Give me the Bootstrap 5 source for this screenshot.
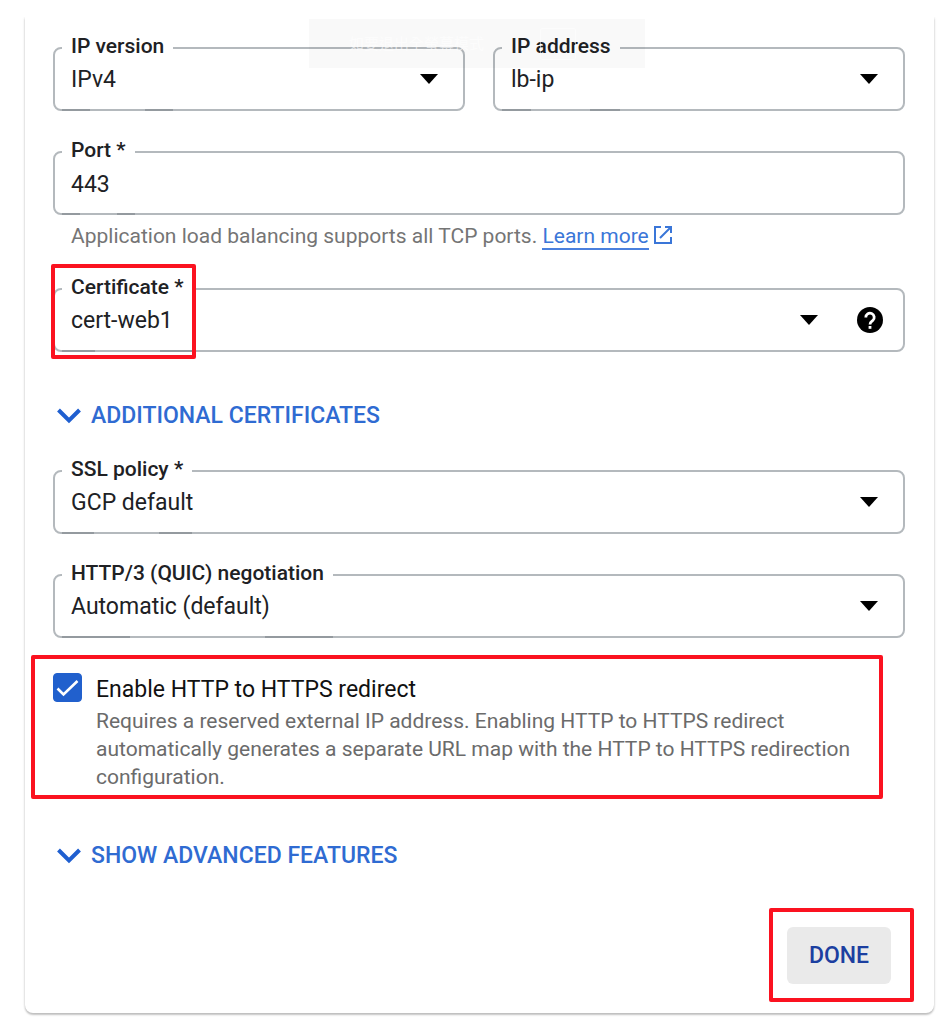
<!DOCTYPE html>
<html lang="en">
<head>
<meta charset="utf-8">
<meta name="viewport" content="width=device-width, initial-scale=1">
<title>Frontend configuration</title>
<link href="https://cdn.jsdelivr.net/npm/bootstrap@5.3.0/dist/css/bootstrap.min.css" rel="stylesheet">
<style>
  body { padding: 17px 14px 12px 25px; font-family: Roboto, "Noto Sans CJK TC", sans-serif; font-size: 23px; line-height: 28px; color: #202124; background: #fff; }
  .panel { padding: 30px 29px 11px 28px; border-radius: 0 0 8px 8px; background: #fff;
    box-shadow: 0 2px 2px rgba(0,0,0,.22), 0 0 3px rgba(0,0,0,.12); clip-path: inset(0 -8px -8px -8px); }
  .pair { gap: 28px; }
  .gap-field { margin-top: 40px; }
  .gap-hint { margin-top: 38px; }
  .gap-toggle { margin-top: 50px; }
  .gap-advanced { margin-top: 43px; }
  .outlined { height: 64px; border: 2px solid #b4b9bd; border-radius: 8px; }
  .outlined > label { position: absolute; top: -16px; left: 7px; padding: 0 9px; background: #fff; font-size: 21px; line-height: 26px; font-weight: 500; white-space: nowrap; }
  .outlined > label::after { content: ""; position: absolute; left: 0; right: 0; top: 76px; height: 2px;
    background: linear-gradient(90deg, #949a9f 25%, #b4b9bd 25% 75%, #949a9f 75%); }
  .entry { width: 100%; height: 60px; padding: 2px 16px 0; border: 0; background: transparent; color: #202124; font: inherit; line-height: 58px; appearance: none; }
  .outlined .caret { position: absolute; right: 25px; top: 25px; width: 18px; height: 10px; pointer-events: none; }
  .outlined .caret.inset { right: 85px; }
  .help-btn { position: absolute; right: 20px; top: 17px; line-height: 0; }
  .hint { padding: 7px 0 0 18px; font-size: 21px; line-height: 28px; color: #757575; }
  .hint a { color: #3a76d8; text-decoration: none; }
  .hint a span { border-bottom: 2px solid #4a80de; }
  .hint a svg { margin-left: 4px; vertical-align: -2px; }
  .toggle { gap: 10px; padding: 0 4px; font-size: 23px; line-height: 28px; font-weight: 500; color: #2f6bd2; }
  .callout { border: 4px solid #fb1220; border-radius: 2px; }
  .callout-cert { position: absolute; left: -4px; top: -26px; width: 145px; height: 95px; pointer-events: none; }
  .callout-redirect { gap: 14px; margin: 17px 22px 0 -22px; padding: 14px 12px 4px 18px; }
  .callout-done { padding: 15px 19px 14px 14px; margin-right: -9px; }
  .tick.form-check-input { width: 29px; height: 29px; margin: 0; border-radius: 4px; }
  .tick.form-check-input:checked { background-color: #2160cd; border-color: #2160cd; background-size: 29px 29px;
    background-image: url("data:image/svg+xml,%3Csvg xmlns='http://www.w3.org/2000/svg' viewBox='0 0 29 29'%3E%3Cpath d='M4.500 15.500L10.500 21.500 24.500 8' fill='none' stroke='white' stroke-width='2.600'/%3E%3C/svg%3E"); }
  .redirect-label { font-size: 23px; line-height: 34px; color: #111; }
  .redirect-note { font-size: 21px; line-height: 28px; color: #6b6b6b; }
  .done-btn { width: 104px; height: 57px; border-radius: 6px; background: #eaeaea; border: 0; color: #1c3fa0; font-size: 23px; font-weight: 500; }
  .toast-note { position: absolute; left: 309px; right: 303px; top: 19px; height: 49px; padding-left: 40px; gap: 56px; background: rgba(0,0,0,.022); color: rgba(255,255,255,.6); font-size: 15px; pointer-events: none; }
  .key-frame { width: 36px; height: 32px; border: 1px solid rgba(255,255,255,.5); border-radius: 2px; }
</style>
</head>
<body class="min-vh-100">
<main class="panel">
  <form>
    <div class="d-flex pair">
      <div class="outlined position-relative flex-fill w-50">
        <label for="ipver">IP version</label>
        <select class="entry" id="ipver"><option>IPv4</option></select>
        <svg class="caret" viewBox="0 0 18 10"><path d="M0 0h18L9 10z"/></svg>
      </div>
      <div class="outlined position-relative flex-fill w-50">
        <label for="ipaddr">IP address</label>
        <select class="entry" id="ipaddr"><option>lb-ip</option></select>
        <svg class="caret" viewBox="0 0 18 10"><path d="M0 0h18L9 10z"/></svg>
      </div>
    </div>
    <div class="outlined position-relative gap-field">
      <label for="port">Port *</label>
      <input class="entry" id="port" type="text" value="443">
    </div>
    <div class="hint">Application load balancing supports all TCP ports. <a href="#"><span>Learn more</span><svg width="20" height="20" viewBox="0 0 20 20" fill="none" stroke="currentColor" stroke-width="2"><path d="M8 2H2v16h16v-6M12 2h6v6M18 2L7 13"/></svg></a></div>
    <div class="outlined position-relative gap-hint">
      <label for="cert">Certificate *</label>
      <select class="entry" id="cert"><option>cert-web1</option></select>
      <svg class="caret inset" viewBox="0 0 18 10"><path d="M0 0h18L9 10z"/></svg>
      <button type="button" class="help-btn btn p-0 border-0" aria-label="Help"><svg width="26" height="26" viewBox="0 0 26 26"><circle cx="13" cy="13" r="13"/><path d="M8.800 10.500a4.200 4.200 0 1 1 7 3C14.300 14.800 13 15.300 13 17.500" fill="none" stroke="#fff" stroke-width="2.800"/><rect x="11.600" y="19" width="2.800" height="2.800" fill="#fff"/></svg></button>
      <div class="callout callout-cert"></div>
    </div>
    <button type="button" class="toggle btn border-0 d-flex align-items-center gap-toggle"><svg width="24" height="16" viewBox="0 0 24 16" fill="none" stroke="#1f5fd0" stroke-width="4"><path d="M1.500 2L12 12.500 22.500 2"/></svg>ADDITIONAL CERTIFICATES</button>
    <div class="outlined position-relative gap-field">
      <label for="ssl">SSL policy *</label>
      <select class="entry" id="ssl"><option>GCP default</option></select>
      <svg class="caret" viewBox="0 0 18 10"><path d="M0 0h18L9 10z"/></svg>
    </div>
    <div class="outlined position-relative gap-field">
      <label for="quic">HTTP/3 (QUIC) negotiation</label>
      <select class="entry" id="quic"><option>Automatic (default)</option></select>
      <svg class="caret" viewBox="0 0 18 10"><path d="M0 0h18L9 10z"/></svg>
    </div>
    <div class="callout callout-redirect d-flex align-items-start">
      <input class="tick form-check-input flex-shrink-0" type="checkbox" id="redir" checked>
      <div>
        <label class="redirect-label d-block" for="redir">Enable HTTP to HTTPS redirect</label>
        <div class="redirect-note">Requires a reserved external IP address. Enabling HTTP to HTTPS redirect automatically generates a separate URL map with the HTTP to HTTPS redirection configuration.</div>
      </div>
    </div>
    <button type="button" class="toggle btn border-0 d-flex align-items-center gap-advanced"><svg width="24" height="16" viewBox="0 0 24 16" fill="none" stroke="#1f5fd0" stroke-width="4"><path d="M1.500 2L12 12.500 22.500 2"/></svg>SHOW ADVANCED FEATURES</button>
    <div class="d-flex justify-content-end gap-hint">
      <div class="callout callout-done"><button type="button" class="done-btn">DONE</button></div>
    </div>
  </form>
</main>
<div class="toast-note d-flex align-items-center"><span>如要退出全螢幕模式</span><span class="key-frame"></span></div>
<script src="https://cdn.jsdelivr.net/npm/bootstrap@5.3.0/dist/js/bootstrap.bundle.min.js"></script>
</body>
</html>
